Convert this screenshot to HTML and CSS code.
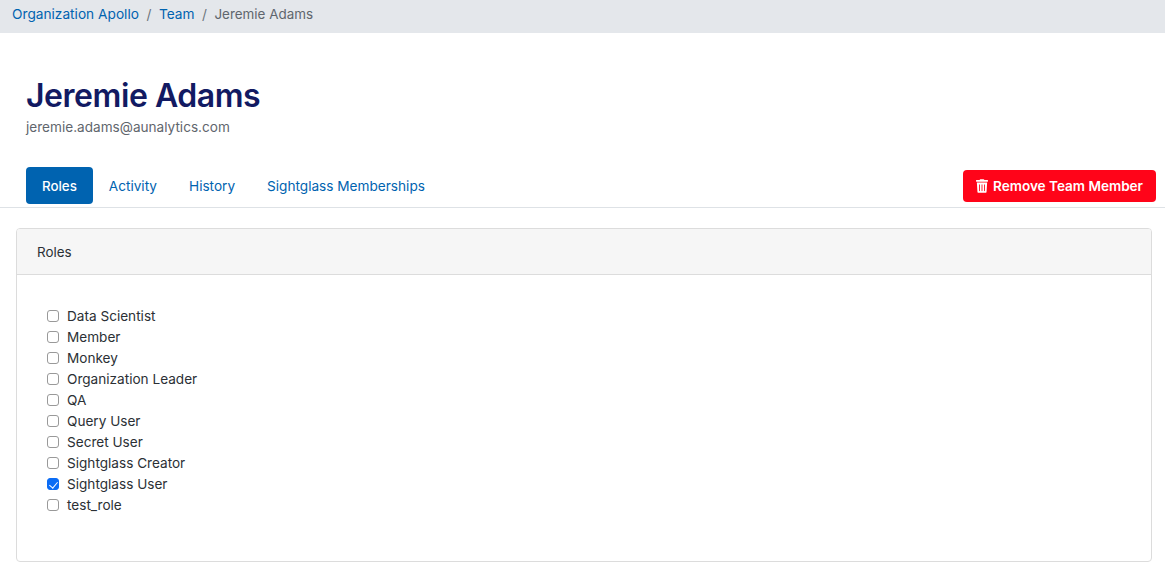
FILE: index.html
```html
<!DOCTYPE html>
<html lang="en">
<head>
<meta charset="utf-8">
<title>Jeremie Adams</title>
<link rel="stylesheet" href="styles.css">
</head>
<body>
<nav class="breadcrumb">
  <a href="#">Organization Apollo</a><span class="sep">/</span><a href="#">Team</a><span class="sep">/</span><span class="current">Jeremie Adams</span>
</nav>
<header class="profile">
  <h1>Jeremie Adams</h1>
  <p>jeremie.adams@aunalytics.com</p>
</header>
<div class="tabbar">
  <ul class="tabs">
    <li><a class="tab active" href="#">Roles</a></li>
    <li><a class="tab" href="#">Activity</a></li>
    <li><a class="tab" href="#">History</a></li>
    <li><a class="tab" href="#">Sightglass Memberships</a></li>
  </ul>
  <button class="danger" type="button">
    <svg class="trash" viewBox="0 0 448 512" aria-hidden="true"><path fill="currentColor" d="M432 32H312l-9.400-18.700A24 24 0 0 0 281.100 0H166.800a23.700 23.700 0 0 0-21.400 13.300L136 32H16A16 16 0 0 0 0 48v32a16 16 0 0 0 16 16h416a16 16 0 0 0 16-16V48a16 16 0 0 0-16-16zM53.200 467a48 48 0 0 0 47.900 45h245.800a48 48 0 0 0 47.900-45L416 128H32zM144 208v224a16 16 0 0 1-32 0V208a16 16 0 0 1 32 0zm96 0v224a16 16 0 0 1-32 0V208a16 16 0 0 1 32 0zm96 0v224a16 16 0 0 1-32 0V208a16 16 0 0 1 32 0z"/></svg>
    Remove Team Member
  </button>
</div>
<section class="card">
  <div class="card-header">Roles</div>
  <div class="card-body">
    <label class="role"><input type="checkbox">Data Scientist</label>
    <label class="role"><input type="checkbox">Member</label>
    <label class="role"><input type="checkbox">Monkey</label>
    <label class="role"><input type="checkbox">Organization Leader</label>
    <label class="role"><input type="checkbox">QA</label>
    <label class="role"><input type="checkbox">Query User</label>
    <label class="role"><input type="checkbox">Secret User</label>
    <label class="role"><input type="checkbox">Sightglass Creator</label>
    <label class="role"><input type="checkbox" checked>Sightglass User</label>
    <label class="role"><input type="checkbox">test_role</label>
  </div>
</section>
</body>
</html>
```
FILE: styles.css
```css
* { box-sizing: border-box; }
html, body { margin: 0; padding: 0; }
body {
  font-family: Inter, "Liberation Sans", sans-serif;
  font-size: 14px;
  line-height: 21px;
  color: #2b3035;
  background: #fff;
  overflow: hidden;
}
a { color: #0063b0; text-decoration: none; }
.breadcrumb {
  display: flex;
  align-items: center;
  height: 33px;
  padding: 0 12px 5px;
  background: #e4e7eb;
  font-size: 13.700px;
}
.sep { padding: 0 7.500px; color: #6c757d; }
.current { color: #5f666d; font-size: 13.450px; }
.profile { padding: 43px 26px 0; }
.profile h1 {
  margin: 0;
  font-size: 32px;
  line-height: 40px;
  font-weight: 600;
  letter-spacing: -0.450px;
  color: #121a62;
}
.profile p {
  margin: 1px 0 0;
  font-size: 13.600px;
  line-height: 20px;
  color: #5f666d;
}
.tabbar {
  display: flex;
  justify-content: space-between;
  align-items: flex-start;
  height: 41px;
  margin-top: 30px;
  padding: 0 9px 0 26px;
  border-bottom: 1px solid #dee2e6;
}
.tabs { display: flex; list-style: none; margin: 0; padding: 0; }
.tab {
  display: block;
  height: 37px;
  padding: 9px 16px 0;
  border-radius: 4px;
  font-size: 13.620px;
}
.tab.active { background: #0063b0; color: #fff; font-weight: 500; font-size: 13.300px; }
.danger {
  display: flex;
  align-items: center;
  gap: 5px;
  height: 32px;
  margin-top: 3px;
  padding: 0 13px;
  border: 0;
  border-radius: 4px;
  background: #ff0419;
  color: #fff;
  font: 600 13.550px/21px Inter, "Liberation Sans", sans-serif;
}
.trash { width: 12px; height: 14px; }
.card {
  margin: 20px 13px 0 16px;
  height: 334px;
  border: 1px solid #dcdcdc;
  border-radius: 4px;
}
.card-header {
  height: 46px;
  padding: 13px 20px 0;
  background: #f6f6f6;
  border-bottom: 1px solid #dcdcdc;
  border-radius: 3px 3px 0 0;
  font-size: 13.400px;
}
.card-body { display: flex; flex-direction: column; padding: 31px 30px 0; }
.role {
  display: flex;
  align-items: center;
  height: 21px;
  font-size: 13.600px;
}
.role input {
  appearance: none;
  position: relative;
  width: 12px;
  height: 12px;
  margin: 0 8px 2px 0;
  border: 1px solid #999;
  border-radius: 3px;
  background: #fff;
}
.role input:checked { background: #0b6cf5; border-color: #0b6cf5; }
.role input:checked::after {
  content: "";
  position: absolute;
  left: 3px;
  top: 1px;
  width: 4px;
  height: 7px;
  border: solid #fff;
  border-width: 0 1.500px 1.500px 0;
  transform: rotate(40deg);
}
```
